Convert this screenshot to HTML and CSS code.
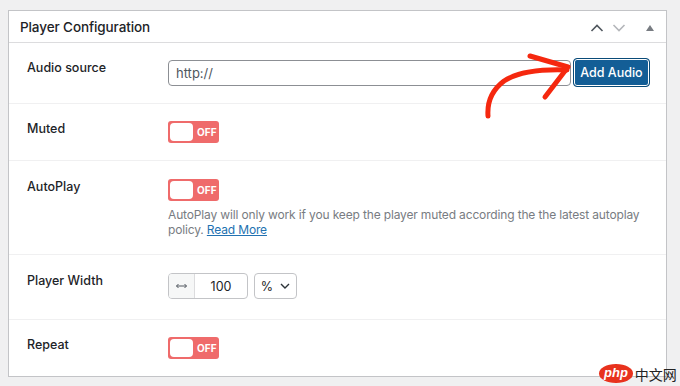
FILE: index.html
```html
<!DOCTYPE html>
<html>
<head>
<meta charset="utf-8">
<link rel="stylesheet" href="styles.css">
</head>
<body>
<div class="postbox">
  <div class="postbox-header">
    <h2 class="title">Player Configuration</h2>
    <div class="handles">
      <svg class="h-icon" width="14" height="10" viewBox="0 0 14 10"><path d="M1.5 8 L7 2.5 L12.5 8" fill="none" stroke="#50575e" stroke-width="1.6"/></svg>
      <svg class="h-icon" width="14" height="10" viewBox="0 0 14 10"><path d="M1.5 2 L7 7.5 L12.5 2" fill="none" stroke="#b4b6ba" stroke-width="1.6"/></svg>
      <svg class="h-tri" width="8" height="6" viewBox="0 0 8 6"><path d="M0 6 L4 0 L8 6 Z" fill="#787c82"/></svg>
    </div>
  </div>
  <div class="rows">
    <div class="row row-audio">
      <div class="label">Audio source</div>
      <div class="control audio-control">
        <div class="text-input">http://</div>
        <button class="btn-primary">Add Audio</button>
      </div>
    </div>
    <div class="row">
      <div class="label">Muted</div>
      <div class="control">
        <div class="toggle"><span class="knob"></span><span class="off">OFF</span></div>
      </div>
    </div>
    <div class="row row-auto">
      <div class="label">AutoPlay</div>
      <div class="control">
        <div class="toggle"><span class="knob"></span><span class="off">OFF</span></div>
        <p class="desc">AutoPlay will only work if you keep the player muted according the the latest autoplay policy. <a href="#" class="link">Read More</a></p>
      </div>
    </div>
    <div class="row row-width">
      <div class="label">Player Width</div>
      <div class="control width-control">
        <div class="num-group">
          <span class="prefix"><svg width="11" height="6" viewBox="0 0 11 6"><path d="M0.5 3 H10.5 M2.5 1 L0.5 3 L2.5 5 M8.5 1 L10.5 3 L8.5 5" fill="none" stroke="#50575e" stroke-width="1"/></svg></span>
          <span class="num">100</span>
        </div>
        <div class="select">% <svg width="10" height="6" viewBox="0 0 10 6"><path d="M1 1 L5 5 L9 1" fill="none" stroke="#2c3338" stroke-width="1.4"/></svg></div>
      </div>
    </div>
    <div class="row row-last">
      <div class="label">Repeat</div>
      <div class="control">
        <div class="toggle"><span class="knob"></span><span class="off">OFF</span></div>
      </div>
    </div>
  </div>
</div>

<svg class="arrow" width="680" height="386" viewBox="0 0 680 386">
  <path d="M488 116 C487 102 492 90 504 81 C518 72 540 69 567 70" fill="none" stroke="#f5280f" stroke-width="5" stroke-linecap="round"/>
  <path d="M530 56 L568 67 L545 97" fill="none" stroke="#f5280f" stroke-width="5" stroke-linecap="round" stroke-linejoin="round"/>
</svg>

<div class="watermark">
  <span class="wm-php">php</span><span class="wm-cn">中文网</span>
</div>
</body>
</html>
```

FILE: styles.css
```css
html, body {
  margin: 0;
  padding: 0;
}
body {
  position: relative;
  width: 680px;
  height: 386px;
  overflow: hidden;
  background: #f0f0f1;
  font-family: Inter, "Noto Sans", "Liberation Sans", sans-serif;
  color: #1d2327;
  padding: 10px 0 0 8px;
  box-sizing: border-box;
}
.postbox {
  width: 659px;
  border: 1px solid #c3c4c7;
  background: #fff;
  box-sizing: border-box;
}
.postbox-header {
  height: 32px;
  border-bottom: 1px solid #dcdcde;
  display: flex;
  align-items: center;
  justify-content: space-between;
  padding: 0 12px 0 11px;
  box-sizing: border-box;
}
.title {
  margin: 0;
  font-size: 13.5px;
  font-weight: 500;
  color: #1d2327;
  letter-spacing: -0.1px;
}
.handles {
  display: flex;
  align-items: center;
  gap: 8px;
  padding-top: 2px;
}
.h-tri {
  margin-left: 12px;
}
.rows {
  display: flex;
  flex-direction: column;
}
.row {
  display: grid;
  grid-template-columns: 141px 1fr;
  padding: 17px 15px 17px 18px;
  border-bottom: 1px solid #f0f0f1;
}
.row-audio {
  padding-top: 15px;
  padding-bottom: 16px;
}
.row-auto {
  padding-top: 18px;
  padding-bottom: 17px;
}
.row-width {
  padding-top: 18px;
  padding-bottom: 20px;
}
.row-last {
  border-bottom: none;
  padding-bottom: 17px;
}
.label {
  font-size: 12.5px;
  font-weight: 500;
  line-height: 16px;
  color: #1d2327;
}
.row-audio .label {
  padding-top: 2px;
}
.control {
  display: flex;
  flex-direction: column;
  align-items: flex-start;
}
.audio-control {
  flex-direction: row;
  align-items: center;
  gap: 2px;
}
.text-input {
  width: 403px;
  height: 26px;
  box-sizing: border-box;
  border: 1px solid #8c8f94;
  border-radius: 4px;
  font-size: 13px;
  color: #50575e;
  padding: 0 7px;
  display: flex;
  align-items: center;
}
.btn-primary {
  width: 77px;
  height: 29px;
  box-sizing: border-box;
  border: 1px solid #0a4b78;
  border-radius: 4px;
  background: #135e96;
  box-shadow: inset 0 0 0 1px #fff;
  color: #fff;
  font-family: inherit;
  font-size: 12.5px;
  font-weight: 500;
  padding: 0;
  cursor: pointer;
}
.toggle {
  width: 51px;
  height: 22px;
  border-radius: 3px;
  background: #ef6b6b;
  box-sizing: border-box;
  padding: 2px;
  display: flex;
  align-items: center;
}
.knob {
  width: 23px;
  height: 18px;
  background: #fff;
  border-radius: 4px;
}
.off {
  color: #fff;
  font-size: 10px;
  font-weight: 700;
  margin-left: 4px;
  letter-spacing: 0.1px;
}
.desc {
  margin: 6px 0 0;
  font-size: 12px;
  line-height: 15px;
  color: #787c82;
  max-width: 482px;
  letter-spacing: -0.15px;
}
.link {
  color: #2271b1;
  text-decoration: underline;
}
.width-control {
  flex-direction: row;
  align-items: center;
  gap: 6px;
}
.num-group {
  display: flex;
  height: 26px;
  width: 80px;
  box-sizing: border-box;
  border: 1px solid #c3c4c7;
  border-radius: 4px;
  overflow: hidden;
}
.prefix {
  width: 25px;
  background: #f6f7f7;
  border-right: 1px solid #dcdcde;
  display: flex;
  align-items: center;
  justify-content: center;
}
.num {
  flex: 1;
  display: flex;
  align-items: center;
  justify-content: center;
  font-size: 12.5px;
  color: #1d2327;
}
.select {
  width: 43px;
  height: 26px;
  box-sizing: border-box;
  border: 1px solid #c3c4c7;
  border-radius: 4px;
  display: flex;
  align-items: center;
  justify-content: center;
  gap: 7px;
  font-size: 12.5px;
  color: #1d2327;
}
.arrow {
  position: absolute;
  left: 0;
  top: 0;
  pointer-events: none;
}
.watermark {
  position: absolute;
  left: 599px;
  top: 364px;
  display: flex;
  align-items: center;
  gap: 2px;
}
.wm-php {
  background: #e8321d;
  color: #fff;
  font-family: "Liberation Sans", sans-serif;
  font-style: italic;
  font-size: 13px;
  font-weight: 700;
  border-radius: 50%;
  padding: 1px 5px 3px;
  line-height: 15px;
}
.wm-cn {
  font-family: "Noto Sans CJK SC", sans-serif;
  font-size: 14px;
  color: #222;
  line-height: 18px;
}
```
